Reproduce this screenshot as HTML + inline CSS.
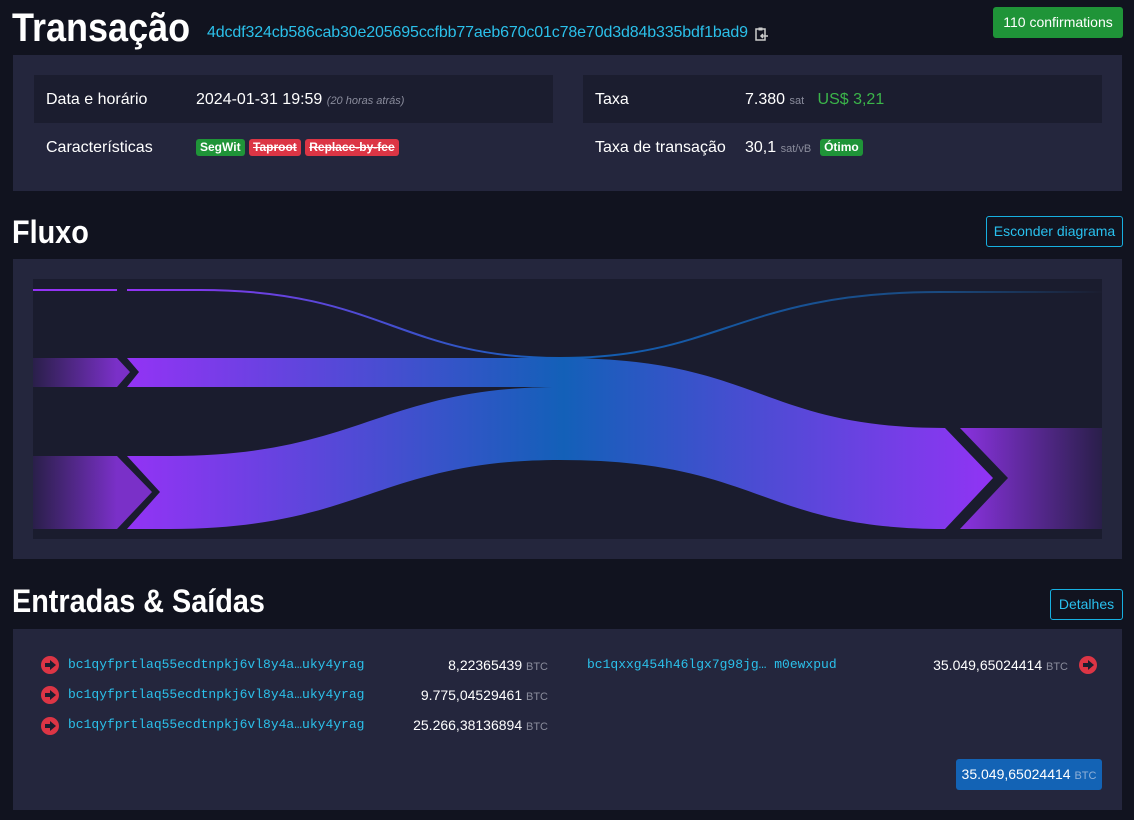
<!DOCTYPE html>
<html><head><meta charset="utf-8"><style>
*{box-sizing:border-box;margin:0;padding:0}
body{width:1134px;height:820px;background:#11131f;font-family:"Liberation Sans",sans-serif;color:#fff;position:relative;overflow:hidden}
.a{position:absolute}
h1{position:absolute;font-weight:bold;font-size:40px;left:12px;line-height:1;transform:scaleX(0.9);transform-origin:0 0}
.box{position:absolute;background:#24263d;left:13px;width:1109px}
.row{position:absolute;height:48px;font-size:16px;line-height:50px}
.dark{background:#1b1d2f}
.lbl{position:absolute;left:12px}
.val{position:absolute;left:162px}
.u{color:#8a8c9c;font-size:11px}
.badge{display:inline-block;font-size:12px;font-weight:bold;line-height:17px;padding:0 4px;border-radius:3px;vertical-align:middle}
.btn{position:absolute;border:1px solid #17b0e0;color:#29c0ee;border-radius:3px;font-size:14px;text-align:center;line-height:28px}
.mono{font-family:"Liberation Mono",monospace;color:#2bc0ea;font-size:13px}
.ic{position:absolute;width:18px;height:18px;border-radius:50%;background:#dc3545}
.ic:after{content:"";position:absolute;left:4px;top:7px;width:5px;height:4px;background:#1b1d2f}
.ic:before{content:"";position:absolute;left:9px;top:4px;border-left:6px solid #1b1d2f;border-top:5px solid transparent;border-bottom:5px solid transparent}
.amt{position:absolute;font-size:14px;text-align:right}
</style></head><body>
<h1 style="top:8px">Transação</h1>
<div class="a" style="left:207px;top:24px;font-size:16px;color:#2bc0ea;letter-spacing:-0.14px">4dcdf324cb586cab30e205695ccfbb77aeb670c01c78e70d3d84b335bdf1bad9</div>
<svg class="a" style="left:755px;top:27px" width="14" height="14" viewBox="0 0 14 14"><rect x="1" y="2" width="9" height="11" fill="none" stroke="#ccc" stroke-width="1.5"/><rect x="3.5" y="0.5" width="4" height="3" fill="#ccc"/><path d="M13 9H6M8 7L6 9L8 11" stroke="#ccc" stroke-width="1.5" fill="none"/></svg>
<div class="a" style="left:993px;top:7px;width:130px;height:31px;background:#1f9438;border-radius:3px;font-size:14px;line-height:31px;text-align:center">110 confirmations</div>

<div class="box" style="top:55px;height:136px">
 <div class="row dark" style="left:21px;top:20px;width:519px"><span class="lbl">Data e horário</span><span class="val">2024-01-31 19:59 <i style="font-size:11px;color:#8a8c9c">(20 horas atrás)</i></span></div>
 <div class="row" style="left:21px;top:68px;width:519px"><span class="lbl">Características</span><span class="val"><span class="badge" style="background:#1f9438">SegWit</span> <span class="badge" style="background:#dc3545;text-decoration:line-through">Taproot</span> <span class="badge" style="background:#dc3545;text-decoration:line-through">Replace-by-fee</span></span></div>
 <div class="row dark" style="left:570px;top:20px;width:519px"><span class="lbl">Taxa</span><span class="val">7.380 <span class="u">sat</span> &nbsp; <span style="color:#3bb54a">US$ 3,21</span></span></div>
 <div class="row" style="left:570px;top:68px;width:519px"><span class="lbl">Taxa de transação</span><span class="val">30,1 <span class="u">sat/vB</span> &nbsp;<span class="badge" style="background:#1f9438">Ótimo</span></span></div>
</div>

<h1 style="top:216px;font-size:32px">Fluxo</h1>
<div class="btn" style="left:986px;top:216px;width:137px;height:31px">Esconder diagrama</div>
<div class="box" style="top:259px;height:300px"></div>
<svg class="a" style="left:0;top:0" width="1134" height="560">
<defs>
<linearGradient id="g" x1="127" x2="1000" y1="0" y2="0" gradientUnits="userSpaceOnUse"><stop offset="0" stop-color="#9333f5"/><stop offset="0.5" stop-color="#1360b8"/><stop offset="1" stop-color="#9333f5"/></linearGradient>
<linearGradient id="si" x1="33" x2="117" gradientUnits="userSpaceOnUse"><stop offset="0" stop-color="#2a1f4a"/><stop offset="1" stop-color="#7a30c8"/></linearGradient>
<linearGradient id="so" x1="960" x2="1102" gradientUnits="userSpaceOnUse"><stop offset="0" stop-color="#8a32e0"/><stop offset="1" stop-color="#2a1f4a"/></linearGradient>
<linearGradient id="to" x1="560" x2="1102" gradientUnits="userSpaceOnUse"><stop offset="0" stop-color="#1360b8"/><stop offset="0.7" stop-color="#1a4a80"/><stop offset="1" stop-color="#1b1d2f"/></linearGradient>
</defs>
<rect x="33" y="279" width="1069" height="260" fill="#1a1c2e"/>
<path d="M33 290H117M127 290H200C380 290 400 358 560 358" stroke="url(#g)" stroke-width="2" fill="none"/>
<path d="M560 358C720 358 740 292 940 292H1102" stroke="url(#to)" stroke-width="2" fill="none"/>
<path d="M33 358H117L130 372L117 387H33Z" fill="url(#si)"/>
<path d="M33 456H117L152 492L117 529H33Z" fill="url(#si)"/>
<path d="M127 358H560V387H127L139 372Z" fill="url(#g)"/>
<path d="M127 456H170C360 456 380 387 560 387V460C380 460 360 529 170 529H127L160 492Z" fill="url(#g)"/>
<path d="M560 358C760 358 760 428 945 428L993 478L945 529C760 529 760 460 560 460Z" fill="url(#g)"/>
<path d="M960 428H1102V529H960L1008 478Z" fill="url(#so)"/>
</svg>

<h1 style="top:585px;font-size:32px">Entradas &amp; Saídas</h1>
<div class="btn" style="left:1050px;top:589px;width:73px;height:31px">Detalhes</div>
<div class="box" style="top:629px;height:181px">
 <div class="ic" style="left:28px;top:27px"></div><div class="a mono" style="left:55px;top:28px">bc1qyfprtlaq55ecdtnpkj6vl8y4a…uky4yrag</div>
 <div class="amt" style="right:574px;top:28px">8,22365439 <span class="u">BTC</span></div>
 <div class="ic" style="left:28px;top:57px"></div><div class="a mono" style="left:55px;top:58px">bc1qyfprtlaq55ecdtnpkj6vl8y4a…uky4yrag</div>
 <div class="amt" style="right:574px;top:58px">9.775,04529461 <span class="u">BTC</span></div>
 <div class="ic" style="left:28px;top:88px"></div><div class="a mono" style="left:55px;top:88px">bc1qyfprtlaq55ecdtnpkj6vl8y4a…uky4yrag</div>
 <div class="amt" style="right:574px;top:88px">25.266,38136894 <span class="u">BTC</span></div>
 <div class="a mono" style="left:574px;top:28px">bc1qxxg454h46lgx7g98jg… m0ewxpud</div>
 <div class="amt" style="right:54px;top:28px">35.049,65024414 <span class="u">BTC</span></div>
 <div class="ic" style="left:1066px;top:27px"></div>
 <div class="a" style="left:943px;top:130px;width:146px;height:31px;background:#1363b5;border-radius:3px;font-size:14px;line-height:31px;text-align:center">35.049,65024414 <span style="font-size:11px;color:#8fb0d8">BTC</span></div>
</div>
</body></html>
